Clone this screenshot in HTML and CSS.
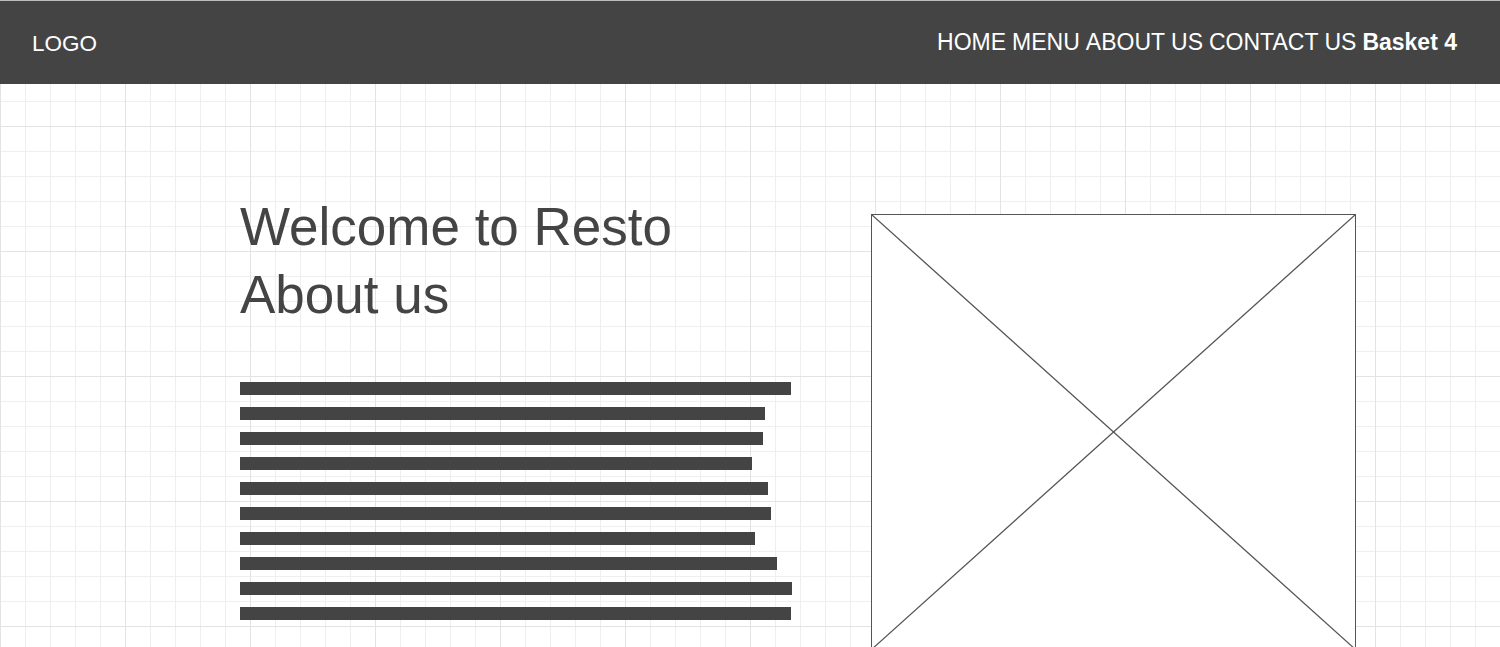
FILE: index.html
```html
<!DOCTYPE html>
<html lang="en">
<head>
<meta charset="utf-8">
<title>Resto</title>
<link rel="stylesheet" href="styles.css">
</head>
<body>
<header class="topbar">
  <div class="logo">LOGO</div>
  <nav class="nav">
    <a class="nav-link" href="#">HOME</a>
    <a class="nav-link" href="#">MENU</a>
    <a class="nav-link" href="#">ABOUT US</a>
    <a class="nav-link" href="#">CONTACT US</a>
    <a class="nav-link nav-basket" href="#">Basket 4</a>
  </nav>
</header>
<main class="content">
  <section class="intro">
    <h1 class="title">Welcome to Resto<br>About us</h1>
    <div class="lines">
      <div class="line" style="width:551px"></div>
      <div class="line" style="width:525px"></div>
      <div class="line" style="width:523px"></div>
      <div class="line" style="width:512px"></div>
      <div class="line" style="width:528px"></div>
      <div class="line" style="width:531px"></div>
      <div class="line" style="width:515px"></div>
      <div class="line" style="width:537px"></div>
      <div class="line" style="width:552px"></div>
      <div class="line" style="width:551px"></div>
    </div>
  </section>
  <div class="picture">
    <svg class="picture-svg" viewBox="0 0 100 100" preserveAspectRatio="none">
      <line x1="0" y1="0" x2="100" y2="100" vector-effect="non-scaling-stroke"></line>
      <line x1="100" y1="0" x2="0" y2="100" vector-effect="non-scaling-stroke"></line>
    </svg>
  </div>
</main>
</body>
</html>
```

FILE: styles.css
```css
html, body {
  margin: 0;
  padding: 0;
}

body {
  font-family: "Liberation Sans", Arial, sans-serif;
  color: #444444;
  background-color: #ffffff;
  background-image:
    linear-gradient(to right, #e3e3e3 1px, transparent 1px),
    linear-gradient(to bottom, #e3e3e3 1px, transparent 1px),
    linear-gradient(to right, #efefef 1px, transparent 1px),
    linear-gradient(to bottom, #efefef 1px, transparent 1px);
  background-size: 125px 125px, 125px 125px, 25px 25px, 25px 25px;
  background-position: 0 1px, 0 1px, 0 1px, 0 1px;
  min-height: 100vh;
  overflow: hidden;
}

.topbar {
  box-sizing: border-box;
  height: 84px;
  border-top: 1px solid #bdbdbd;
  background: #444444;
  color: #ffffff;
  display: flex;
  justify-content: space-between;
  align-items: baseline;
  padding: 26px 43px 0 32px;
}

.logo {
  font-size: 22.5px;
  line-height: 30px;
  position: relative;
  top: 1px;
}

.nav {
  display: flex;
  gap: 6px;
  font-size: 23px;
  line-height: 30px;
}

.nav-link {
  color: #ffffff;
  text-decoration: none;
}

.nav-basket {
  font-weight: bold;
}

.content {
  display: flex;
  align-items: flex-start;
  padding: 109px 0 0 240px;
}

.intro {
  width: 552px;
}

.title {
  margin: 0;
  font-size: 53px;
  font-weight: normal;
  line-height: 68px;
  color: #444444;
}

.lines {
  margin-top: 53px;
  display: flex;
  flex-direction: column;
  gap: 12px;
}

.line {
  height: 13px;
  background: #444444;
}

.picture {
  margin: 21px 0 0 79px;
  width: 485px;
  height: 436px;
  box-sizing: border-box;
  border: 1px solid #555555;
  background: #ffffff;
  flex: none;
}

.picture-svg {
  display: block;
  width: 100%;
  height: 100%;
}

.picture-svg line {
  stroke: #555555;
  stroke-width: 1.3;
}
```
